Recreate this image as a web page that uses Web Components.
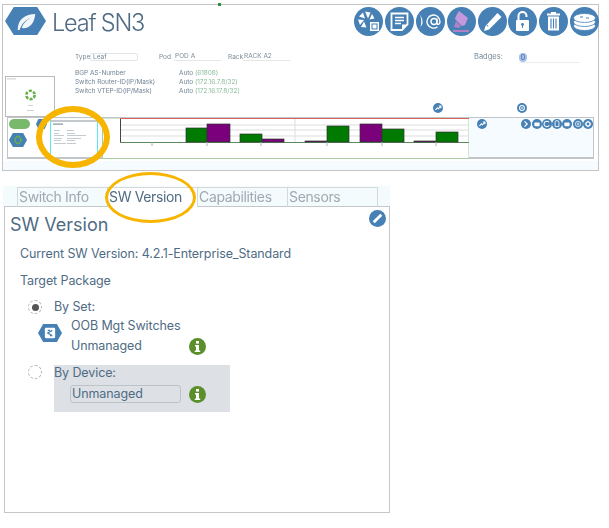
<!DOCTYPE html>
<html>
<head>
<meta charset="utf-8">
<style>
  html, body { margin: 0; background: #fff; }
  body { width: 609px; height: 528px; overflow: hidden; position: relative; font-family: Inter, "Liberation Sans", sans-serif; color: #4f6b84; }
</style>
</head>
<body>
<device-summary></device-summary>
<switch-tabs></switch-tabs>
<version-panel></version-panel>
<ring-mark style="left:36px;top:106px;width:74px;height:62px;--w:6px"></ring-mark>
<ring-mark style="left:105px;top:172px;width:91px;height:51px;--w:3.500px"></ring-mark>
<script>
const BLUE = '#4680b4';
const ICONS = {
  aperture: `<g fill="#fff"><path d="M11 4.500l5.500 1-2.500 6zM18 7l2.500 4.500-5 1zM5 9.500l4-4 2 6zM4 12.500l6 .5-4 5zM7 20l3-5.500 2.500 6zM16 15h9v9h-9z"/></g><rect x="18" y="17" width="5" height="5" fill="none" stroke="${BLUE}" stroke-width="1"/>`,
  note: `<path d="M6.500 6.500h16v11l-5.500 5.500h-10.500z" fill="none" stroke="#fff" stroke-width="1.800"/><path d="M10 10.500h9M10 13.500h9M10 16.500h6" stroke="#fff" stroke-width="1.500"/><path d="M17 23v-5.500h5.500z" fill="#fff"/>`,
  at: `<path d="M3 6c3 5 3 12 0 17 2-5 4-5 3.500-8.500C6.500 11 5 10 3 6z" fill="#fff"/><circle cx="18" cy="14.500" r="3" fill="none" stroke="#fff" stroke-width="1.400"/><path d="M21 11.500v4.500c0 2 3 2 3-1.500a6.500 6.500 0 1 0-2.500 5.200" fill="none" stroke="#fff" stroke-width="1.400"/>`,
  marker: `<path d="M12 4l9 7-3 7-3 1-7-7 1-3z" fill="#c398dc"/><path d="M9 14l5 5-2 2-5-1z" fill="#b080c8"/><path d="M6 23h16v2H6z" fill="#b07fc4"/>`,
  pencil: `<path d="M19.500 6l4 4L11 22.500l-5 1.500 1.500-5z" fill="#fff"/><path d="M9 18l1 1.500" stroke="${BLUE}"/>`,
  unlock: `<rect x="8" y="13" width="13" height="11" rx="1" fill="#fff"/><path d="M10.500 13V9a4 4 0 0 1 8 0v1" fill="none" stroke="#fff" stroke-width="2"/><circle cx="14.500" cy="17.500" r="1.400" fill="${BLUE}"/><path d="M14 18h1v3h-1z" fill="${BLUE}"/>`,
  trash: `<path d="M8 6.500h13v2H8zM12 5h5v1.500h-5z" fill="#fff"/><path d="M9 9.500h11v14H9z" fill="#fff"/><path d="M12 11.500v10M14.500 11.500v10M17 11.500v10" stroke="${BLUE}" stroke-width="1.100"/>`,
  stack: `<g fill="#fff" stroke="${BLUE}" stroke-width=".8"><ellipse cx="14.500" cy="19" rx="11" ry="4.500"/><ellipse cx="14.500" cy="15" rx="11" ry="4.500"/><ellipse cx="14.500" cy="11" rx="11" ry="4.500"/></g><path d="M10 10h3M16 11h3" stroke="${BLUE}"/>`,
  slash: `<path d="M8 21l13-13" stroke="#fff" stroke-width="5"/>`,
  dot: `<circle cx="14.500" cy="14.500" r="7" fill="none" stroke="#fff" stroke-width="3"/><circle cx="14.500" cy="14.500" r="2.500" fill="#fff"/>`,
  trend: `<path d="M7 20l6-6 3 3 6-7M17 9h6v6" fill="none" stroke="#fff" stroke-width="3"/>`,
  prompt: `<path d="M10 7l8 7.500-8 7.500" fill="none" stroke="#fff" stroke-width="3.500"/>`,
  box: `<rect x="7" y="10" width="15" height="11" rx="2" fill="#fff"/>`,
  ring: `<path d="M20 9a8 8 0 1 0 1 9" fill="none" stroke="#fff" stroke-width="3"/>`,
  tag: `<path d="M9 22V10a5.500 5.500 0 0 1 11 0v12z" fill="none" stroke="#fff" stroke-width="2.500"/>`,
  pause: `<circle cx="14.500" cy="14.500" r="8" fill="none" stroke="#fff" stroke-width="2"/><path d="M12.500 10v9M16.500 10v9" stroke="#fff" stroke-width="2"/>`,
  gear: `<circle cx="14.500" cy="14.500" r="6" fill="none" stroke="#fff" stroke-width="3.500"/><path d="M14.500 5v4M14.500 20v4M5 14.500h4M20 14.500h4" stroke="#fff" stroke-width="2.500"/>`
};

class RoundIcon extends HTMLElement {
  connectedCallback() {
    const size = this.getAttribute('size') || 29;
    this.attachShadow({ mode: 'open' }).innerHTML = `
      <style>
        :host { display: block; width: ${size}px; height: ${size}px; flex: none; }
        svg { display: block; width: 100%; height: 100%; }
      </style>
      <svg viewBox="0 0 29 29"><circle cx="14.500" cy="14.500" r="14.500" fill="${BLUE}"/>${ICONS[this.getAttribute('name')] || ''}</svg>`;
  }
}

class HexBadge extends HTMLElement {
  connectedCallback() {
    const w = this.getAttribute('w'), h = this.getAttribute('h');
    const art = { leaf: `<path d="M13 23c0-11 8-16 18-16-1 10-6 15-14 14 2-5 5-8 9-10-5 2-9 6-11 12z" fill="#fff" opacity=".92"/>`,
      loader: `<circle cx="21" cy="14" r="7" fill="none" stroke="#69b04a" stroke-width="4" stroke-dasharray="4 1.500"/>`,
      set: `<rect x="12" y="6" width="18" height="16" rx="2" fill="#fff"/><path d="M25 10l-8 4 8 4M17 10h4M21 18h4" fill="none" stroke="${BLUE}" stroke-width="2"/>` };
    this.attachShadow({ mode: 'open' }).innerHTML = `
      <style>
        :host { display: block; width: ${w}px; height: ${h}px; flex: none; }
        svg { display: block; width: 100%; height: 100%; }
      </style>
      <svg viewBox="0 0 42 28" preserveAspectRatio="none"><path d="M0 14L9 0h24l9 14-9 14H9z" fill="${BLUE}"/>${art[this.getAttribute('art')] || ''}</svg>`;
  }
}

class FieldLine extends HTMLElement {
  connectedCallback() {
    this.attachShadow({ mode: 'open' }).innerHTML = `
      <style>
        :host { display: grid; grid-template-columns: 104px auto; font-size: 6.500px; line-height: 9px; color: #728596; letter-spacing: -.05px; }
        b { font-weight: 400; color: #8bbd9c; }
      </style>
      <span>${this.getAttribute('label')}</span>
      <span>Auto <b>(${this.getAttribute('value')})</b></span>`;
  }
}

class ActivityChart extends HTMLElement {
  connectedCallback() {
    const bars = [[186,21,129,'g'],[207,23,125,'p'],[240,22,135,'g'],[262,22,140,'p'],[305,22,142,'p'],[327,22,127,'g'],[360,22,125,'p'],[382,22,130,'g'],[414,22,142,'p'],[436,22,133,'g']];
    const rects = bars.map(([x, w, y, c]) => `<rect x="${x}" y="${y}" width="${w}" height="${143 - y}" fill="${c === 'g' ? '#007a00' : '#7b007b'}" stroke="#333" stroke-width=".7"/>`).join('');
    const ticks = [152, 207, 261, 327, 382, 436].map(x => `<path d="M${x} 143v4" stroke="#9fb4c8"/>`).join('');
    this.attachShadow({ mode: 'open' }).innerHTML = `
      <style>
        :host { display: block; width: 367px; height: 41px; flex: none; }
        svg { display: block; width: 100%; height: 100%; }
      </style>
      <svg viewBox="102 119 367 41">
        <rect x="102.500" y="119" width="366.500" height="40.500" fill="#fff" stroke="#a8cda0"/>
        <path d="M120 119.500h349" stroke="#d9665c" stroke-width="1.200"/>
        <path d="M120 126h349M120 131h349M120 137h349" stroke="#ddd"/>
        <path d="M295 120v23" stroke="#ddd"/>
        <path d="M120.500 120v23" stroke="#444"/>
        <path d="M120 143.500h349" stroke="#5c8a5c"/>
        ${rects}${ticks}
      </svg>`;
  }
}

class PagePreview extends HTMLElement {
  connectedCallback() {
    const lines = [11, 14, 16, 19, 21, 24].map((y, i) =>
      `<rect x="3" y="${y}" width="${[6, 5, 10, 8, 7, 12][i]}" height=".8" fill="#b5bec6"/><rect x="16" y="${y}" width="${[7, 8, 19, 14, 8, 9][i]}" height=".8" fill="#b5bec6"/>`).join('');
    this.attachShadow({ mode: 'open' }).innerHTML = `
      <style>
        :host { display: block; width: 48px; height: 38px; flex: none; box-sizing: border-box; background: #fff; border: 1px solid #5fe6f0; border-width: 0 1px; }
        svg { display: block; width: 100%; height: 100%; }
      </style>
      <svg viewBox="0 0 46 38"><rect x="0" y="1" width="46" height="2" fill="#c5c9cc"/><rect x="2" y="4.500" width="10" height="1.200" fill="#7f93a5"/>${lines}</svg>`;
  }
}

class MiniThumb extends HTMLElement {
  connectedCallback() {
    this.attachShadow({ mode: 'open' }).innerHTML = `
      <style>
        :host { display: block; width: 50px; height: 41px; box-sizing: border-box; border: 1px solid #b9b9b9; flex: none; }
        svg { display: block; width: 100%; height: 100%; }
      </style>
      <svg viewBox="0 0 48 39"><rect x="1" y="1.500" width="9" height=".8" fill="#b8bec4"/><circle cx="24.500" cy="18" r="4.200" fill="none" stroke="#69b04a" stroke-width="2.600" stroke-dasharray="3 1.400"/><rect x="22" y="28" width="5" height=".8" fill="#c2c6ca"/><rect x="21" y="33" width="7" height=".8" fill="#c2c6ca"/></svg>`;
  }
}

class DeviceSummary extends HTMLElement {
  connectedCallback() {
    const big = ['aperture', 'note', 'at', 'marker', 'pencil', 'unlock', 'trash', 'stack'];
    const mini = ['prompt', 'box', 'ring', 'tag', 'box', 'pause', 'gear'];
    this.attachShadow({ mode: 'open' }).innerHTML = `
      <style>
        :host { display: block; position: relative; width: 597px; height: 167px; margin: 4px 0 0 2px; box-sizing: border-box; background: linear-gradient(#fff 156px, #f5fbfe 156px); border: solid #c4c4c4; border-width: 1px; filter: blur(.4px); }
        .pin { position: absolute; left: 215px; top: -2px; width: 3px; height: 3px; background: #2f8f3a; }
        .head { display: flex; align-items: flex-start; height: 28px; padding: 2px 0 0 2px; }
        h1 { margin: -3px 0 0 6px; font-weight: 300; font-size: 23.500px; line-height: 38px; color: #4f6b84; letter-spacing: -1.200px; flex: 1; white-space: nowrap; }
        .tools { display: flex; gap: 1.800px; margin-right: -1px; }
        .form { display: flex; align-items: center; margin: 17px 0 0 72px; font-size: 6.500px; color: #7a8b99; height: 9px; }
        .form > span { flex: none; }
        .lab { width: 15px; }
        .box { width: 48px; height: 8px; box-sizing: border-box; border: 1px solid #e2e6e9; border-radius: 2px; line-height: 6px; padding-left: 2px; }
        .under { height: 9px; border-bottom: 1px solid #e6e6e6; line-height: 8px; width: 47px; padding-left: 1px; box-sizing: border-box; }
        .gap1 { margin-left: 21px; } .gap2 { margin-left: 7px; }
        .badges { margin-left: 184px; width: 45px; font-size: 7.500px; }
        .count { width: 61px; border-bottom: 1px solid #ececec; height: 9px; margin-top: 2px; }
        .count span { display: block; width: 8px; height: 9px; border-radius: 5px; background: #a5c1ee; font-size: 7px; line-height: 9px; text-align: center; color: #48607a; }
        .mid { display: flex; align-items: flex-start; height: 56px; padding-left: 2px; }
        mini-thumb { margin-top: 15px; }
        .facts { margin: 8px 0 0 20px; width: 360px; flex: none; }
        .pins { display: flex; gap: 74px; margin: 42px 0 0 -2px; }
        .strip { display: flex; margin-left: 4px; width: 587px; height: 42px; box-sizing: border-box; border: solid #bfc5c8; border-width: 1px 1px 2px 1px; background: #f5fbfe; }
        .left { width: 42px; height: 100%; flex: none; padding: 1px 0 0 1px; box-sizing: border-box; background: #fff; display: grid; grid-template-columns: 27px 11px; grid-template-rows: 12px 15px; row-gap: 2px; }
        .pill { width: 21px; height: 10px; border-radius: 5px; background: #79b96b; }
        .right { flex: 1; display: flex; justify-content: space-between; padding: 1px 0 0 8px; }
        .mini { display: flex; gap: .3px; }
        .gutter { width: 4px; flex: none; }
      </style>
      <div class="pin"></div>
      <div class="head">
        <hex-badge w="41" h="28" art="leaf"></hex-badge>
        <h1>Leaf SN3</h1>
        <div class="tools">${big.map(n => `<round-icon name="${n}"></round-icon>`).join('')}</div>
      </div>
      <div class="form">
        <span class="lab">Type</span><span class="box">Leaf</span>
        <span class="lab gap1">Pod</span><span class="under">POD A</span>
        <span class="lab gap2">Rack</span><span class="under">RACK A2</span>
        <span class="badges">Badges:</span><div class="count"><span>0</span></div>
      </div>
      <div class="mid">
        <mini-thumb></mini-thumb>
        <div class="facts">
          <field-line label="BGP AS-Number" value="61808"></field-line>
          <field-line label="Switch Router-ID(IP/Mask)" value="172.16.7.8/32"></field-line>
          <field-line label="Switch VTEP-ID(IP/Mask)" value="172.16.17.8/32"></field-line>
        </div>
        <div class="pins"><round-icon name="trend" size="10"></round-icon><round-icon name="dot" size="10"></round-icon></div>
      </div>
      <div class="strip">
        <div class="left">
          <div class="pill"></div><hex-badge w="11" h="10"></hex-badge>
          <hex-badge w="18" h="14" art="loader"></hex-badge>
        </div>
        <page-preview style="margin-top:1px"></page-preview>
        <div class="gutter"></div>
        <activity-chart></activity-chart>
        <div class="right">
          <round-icon name="trend" size="10"></round-icon>
          <div class="mini">${mini.map(n => `<round-icon name="${n}" size="10"></round-icon>`).join('')}</div>
        </div>
      </div>`;
  }
}

class SwitchTabs extends HTMLElement {
  connectedCallback() {
    const tabs = ['Switch Info', 'SW Version', 'Capabilities', 'Sensors'];
    this.attachShadow({ mode: 'open' }).innerHTML = `
      <style>
        :host { display: flex; width: 387px; height: 20px; margin: 15px 0 0 3px; padding-left: 14px; box-sizing: border-box; background: #f4fbfd; position: relative; z-index: 1; font-size: 14px; letter-spacing: -.35px; filter: blur(.25px); }
        div { box-sizing: border-box; width: 91px; height: 20px; margin-top: 1px; padding-left: 1px; line-height: 17px; color: #a0a9b1; border: 1px solid #d4d8da; border-bottom: 0; margin-right: -1px; white-space: nowrap; overflow: hidden; }
        .on { color: #4f6b84; background: #fff; }
      </style>
      ${tabs.map((t, i) => `<div class="${i === 1 ? 'on' : ''}">${t}</div>`).join('')}`;
  }
}

class InfoDot extends HTMLElement {
  connectedCallback() {
    this.attachShadow({ mode: 'open' }).innerHTML = `
      <style>
        :host { display: block; width: 17px; height: 17px; flex: none; }
        svg { display: block; }
      </style>
      <svg width="17" height="17" viewBox="0 0 17 17"><circle cx="8.500" cy="8.500" r="8.500" fill="#5a8f2b"/><rect x="7" y="3" width="3" height="2.600" fill="#fff"/><path d="M6 7h4v5.500h1.200V14H5.800v-1.500H7V8.500H6z" fill="#fff"/></svg>`;
  }
}

class RadioMark extends HTMLElement {
  connectedCallback() {
    const on = this.hasAttribute('checked');
    this.attachShadow({ mode: 'open' }).innerHTML = `
      <style>
        :host { display: block; width: 14px; height: 14px; flex: none; }
        span { display: flex; align-items: center; justify-content: center; box-sizing: border-box; width: 14px; height: 14px; border-radius: 50%; border: 1px dashed #b5b5b5; }
        i { width: 7px; height: 7px; border-radius: 50%; background: #555; display: ${on ? 'block' : 'none'}; }
      </style>
      <span><i></i></span>`;
  }
}

class VersionPanel extends HTMLElement {
  connectedCallback() {
    this.attachShadow({ mode: 'open' }).innerHTML = `
      <style>
        :host { display: block; width: 386px; height: 307px; margin-left: 4px; box-sizing: border-box; border: 1px solid #c3c7ca; background: #fff; padding: 5px 0 0 5px; position: relative; font-size: 12.500px; letter-spacing: -.1px; color: #4f6b84; }
        h2 { margin: 0; font-weight: 400; font-size: 18px; line-height: 26px; letter-spacing: 0; }
        .edit { position: absolute; right: 3px; top: 3px; }
        .line { margin: 7px 0 0 10px; line-height: 18px; }
        .target { margin-top: 9px; }
        .row { display: flex; }
        .set { margin: 9px 0 0 18px; gap: 12px; align-items: center; height: 16px; line-height: 16px; }
        .group { display: grid; grid-template-columns: 24px 109px 17px; column-gap: 9px; margin: 1px 0 0 28px; grid-template-rows: 20px 20px; line-height: 20px; align-items: center; width: 190px; }
        .group hex-badge { grid-row: 1 / 3; align-self: start; margin-top: 8px; }
        .group span { white-space: nowrap; }
        .device { margin: 9px 0 0 18px; align-items: flex-start; gap: 12px; }
        .shade { width: 176px; height: 47px; box-sizing: border-box; background: #dde1e5; line-height: 15px; }
        .shade .in { display: flex; align-items: center; gap: 8px; margin: 5px 0 0 16px; }
        .field { width: 111px; height: 18px; box-sizing: border-box; border: 1px solid #bcc2c6; border-radius: 3px; padding-left: 1px; line-height: 16px; }
      </style>
      <h2>SW Version</h2>
      <round-icon class="edit" name="slash" size="17"></round-icon>
      <div class="line">Current SW Version: 4.2.1-Enterprise_Standard</div>
      <div class="line target">Target Package</div>
      <div class="row set"><radio-mark checked></radio-mark><span>By Set:</span></div>
      <div class="group">
        <hex-badge w="24" h="18" art="set"></hex-badge>
        <span>OOB Mgt Switches</span><span></span>
        <span>Unmanaged</span><info-dot></info-dot>
      </div>
      <div class="row device">
        <radio-mark></radio-mark>
        <div class="shade">By Device:
          <div class="in"><div class="field">Unmanaged</div><info-dot></info-dot></div>
        </div>
      </div>`;
  }
}

class RingMark extends HTMLElement {
  connectedCallback() {
    this.attachShadow({ mode: 'open' }).innerHTML = `
      <style>
        :host { display: block; position: absolute; box-sizing: border-box; border: var(--w) solid #f7b500; border-radius: 50%; pointer-events: none; z-index: 2; }
      </style>`;
  }
}

customElements.define('round-icon', RoundIcon);
customElements.define('hex-badge', HexBadge);
customElements.define('field-line', FieldLine);
customElements.define('activity-chart', ActivityChart);
customElements.define('page-preview', PagePreview);
customElements.define('mini-thumb', MiniThumb);
customElements.define('device-summary', DeviceSummary);
customElements.define('switch-tabs', SwitchTabs);
customElements.define('info-dot', InfoDot);
customElements.define('radio-mark', RadioMark);
customElements.define('version-panel', VersionPanel);
customElements.define('ring-mark', RingMark);
</script>
</body>
</html>
